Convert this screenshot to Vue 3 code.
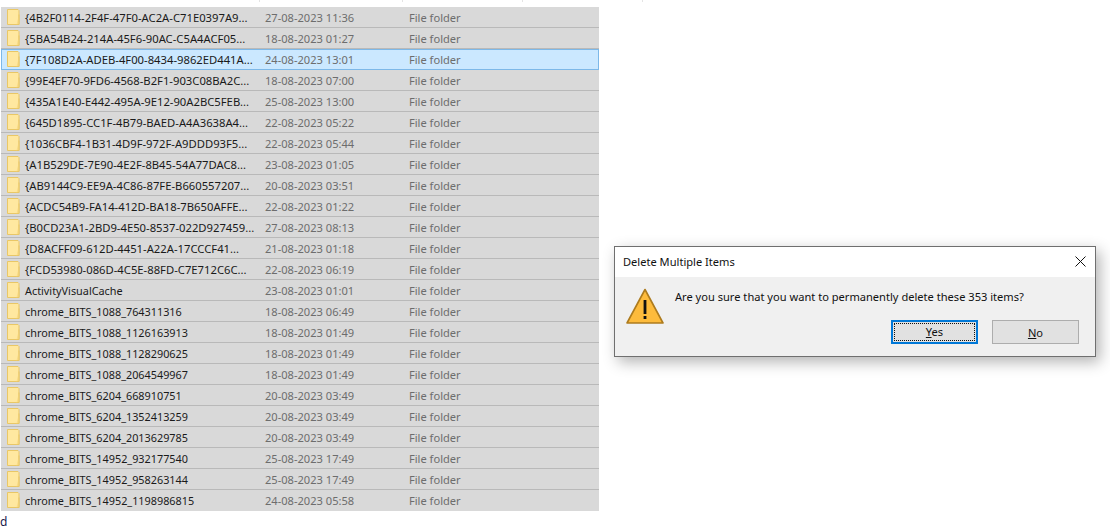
<script setup>
const rows = [
  ['{4B2F0114-2F4F-47F0-AC2A-C71E0397A9...', '27-08-2023 11:36'],
  ['{5BA54B24-214A-45F6-90AC-C5A4ACF05...', '18-08-2023 01:27'],
  ['{7F108D2A-ADEB-4F00-8434-9862ED441A...', '24-08-2023 13:01', true],
  ['{99E4EF70-9FD6-4568-B2F1-903C08BA2C...', '18-08-2023 07:00'],
  ['{435A1E40-E442-495A-9E12-90A2BC5FEB...', '25-08-2023 13:00'],
  ['{645D1895-CC1F-4B79-BAED-A4A3638A4...', '22-08-2023 05:22'],
  ['{1036CBF4-1B31-4D9F-972F-A9DDD93F5...', '22-08-2023 05:44'],
  ['{A1B529DE-7E90-4E2F-8B45-54A77DAC8...', '23-08-2023 01:05'],
  ['{AB9144C9-EE9A-4C86-87FE-B660557207...', '20-08-2023 03:51'],
  ['{ACDC54B9-FA14-412D-BA18-7B650AFFE...', '22-08-2023 01:22'],
  ['{B0CD23A1-2BD9-4E50-8537-022D927459...', '27-08-2023 08:13'],
  ['{D8ACFF09-612D-4451-A22A-17CCCF41...', '21-08-2023 01:18'],
  ['{FCD53980-086D-4C5E-88FD-C7E712C6C...', '22-08-2023 06:19'],
  ['ActivityVisualCache', '23-08-2023 01:01'],
  ['chrome_BITS_1088_764311316', '18-08-2023 06:49'],
  ['chrome_BITS_1088_1126163913', '18-08-2023 01:49'],
  ['chrome_BITS_1088_1128290625', '18-08-2023 01:49'],
  ['chrome_BITS_1088_2064549967', '18-08-2023 01:49'],
  ['chrome_BITS_6204_668910751', '20-08-2023 03:49'],
  ['chrome_BITS_6204_1352413259', '20-08-2023 03:49'],
  ['chrome_BITS_6204_2013629785', '20-08-2023 03:49'],
  ['chrome_BITS_14952_932177540', '25-08-2023 17:49'],
  ['chrome_BITS_14952_958263144', '25-08-2023 17:49'],
  ['chrome_BITS_14952_1198986815', '24-08-2023 05:58'],
]
</script>

<template>
  <div class="page">
    <div class="ticks">
      <i></i><i></i><i></i><i></i>
    </div>
    <div class="list">
      <div v-for="r in rows" :key="r[0]" class="row" :class="{ current: r[2] }">
        <svg class="folder" width="14" height="17" viewBox="0 0 14 17">
          <path d="M.5.5h10.5l1 1v14H.5z" fill="#ffe8a0" stroke="#e9c766" />
          <path d="M12 5.5v10H9.5" fill="#f9dc86" stroke="#e9c766" />
        </svg>
        <span class="name" :class="{ guid: r[0][0] === '{' }">{{ r[0] }}</span>
        <span class="date">{{ r[1] }}</span>
        <span class="type">File folder</span>
      </div>
    </div>
    <div class="stray">d</div>

    <div class="dialog">
      <div class="titlebar">
        <span>Delete Multiple Items</span>
        <svg width="11" height="11" viewBox="0 0 11 11">
          <path d="M.5.5l10 10M10.5.5l-10 10" stroke="#111" fill="none" />
        </svg>
      </div>
      <div class="body">
        <div class="message">
          <svg class="warn" width="38" height="37" viewBox="0 0 38 37">
            <path d="M19 1.5L37 35H1z" fill="#fdbb3c" stroke="#ad7b1e" stroke-width="1.6" stroke-linejoin="round" />
            <rect x="17.6" y="12" width="2.8" height="14" fill="#111" />
            <rect x="17.6" y="28" width="2.8" height="3" fill="#111" />
          </svg>
          <p>Are you sure that you want to permanently delete these 353 items?</p>
        </div>
        <div class="buttons">
          <button class="btn primary"><span><u>Y</u>es</span></button>
          <button class="btn"><span><u>N</u>o</span></button>
        </div>
      </div>
    </div>
  </div>
</template>

<style scoped>
.page {
  position: relative;
  width: 1110px;
  height: 532px;
  overflow: hidden;
  background: #fff;
  font-family: "Noto Sans", "Open Sans", sans-serif;
  font-size: 11.1px;
  box-sizing: border-box;
}

.ticks {
  height: 7px;
  display: flex;
  align-items: flex-start;
  padding-left: 259px;
  gap: 119px;
}

.ticks i {
  width: 1px;
  height: 2px;
  background: #e4e4e4;
}

.ticks i:nth-child(1) {
  margin-right: 23px;
}

.list {
  margin-left: 1px;
  width: 598px;
  background: #d9d9d9;
}

.row {
  height: 21px;
  box-sizing: border-box;
  display: flex;
  align-items: center;
  border-bottom: 1px solid #b9b9b9;
  color: #6d6d6d;
}

.row:last-child {
  border-bottom: 0;
}

.row.current {
  background: #cbe8ff;
  outline: 1px solid #7db8e8;
  outline-offset: -1px;
  border-bottom: 0;
}

.folder {
  margin-left: 6px;
  flex: none;
}

.name {
  margin-left: 4px;
  width: 240px;
  font-size: 10.85px;
  color: #1a1a1a;
  white-space: nowrap;
}

.name.guid {
  font-size: 11.25px;
}

.date {
  width: 144px;
  white-space: nowrap;
}

.type {
  white-space: nowrap;
}

.stray {
  position: absolute;
  left: 0;
  top: 513px;
  font-size: 12px;
  color: #1a1a4a;
}

.dialog {
  position: absolute;
  left: 614px;
  top: 246px;
  width: 482px;
  height: 111px;
  box-sizing: border-box;
  border: 1px solid #6f6f6f;
  background: #f0f0f0;
  box-shadow: 4px 5px 14px rgba(0, 0, 0, 0.3);
  color: #111;
}

.titlebar {
  height: 30px;
  background: #fff;
  display: flex;
  align-items: center;
  justify-content: space-between;
  padding: 0 9px 2px 8px;
  box-sizing: border-box;
}

.body {
  padding: 11px 16px 0 11px;
}

.message {
  display: flex;
  align-items: flex-start;
}

.warn {
  flex: none;
}

.message p {
  margin: 1px 0 0 11px;
  white-space: nowrap;
}

.buttons {
  display: flex;
  justify-content: flex-end;
  gap: 14px;
  margin-top: -5px;
}

.btn {
  width: 87px;
  height: 24px;
  box-sizing: border-box;
  border: 1px solid #adadad;
  background: #e1e1e1;
  font: inherit;
  color: #111;
  padding: 0;
}

.btn.primary {
  border: 2px solid #0078d7;
  display: flex;
  padding: 1px;
}

.btn.primary span {
  flex: 1;
  border: 1px dotted #111;
}
</style>
